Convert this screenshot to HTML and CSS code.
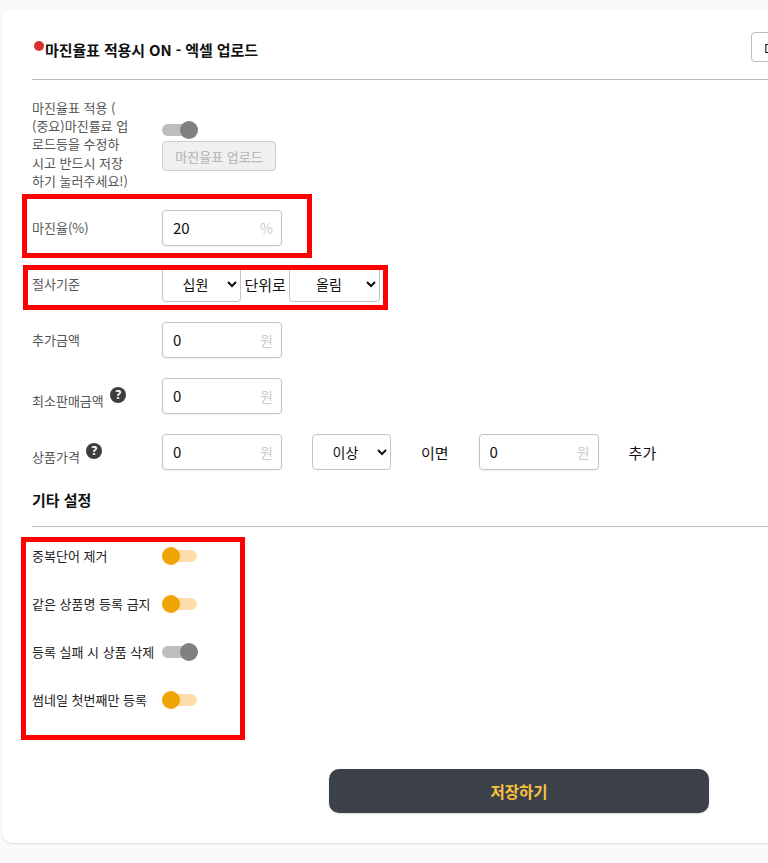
FILE: index.html
```html
<!DOCTYPE html>
<html lang="ko">
<head>
  <meta charset="UTF-8" />
  <meta name="viewport" content="width=device-width, initial-scale=1.0" />
  <title>마진율표 설정</title>
  <link rel="stylesheet" href="styles.css">
</head>
<body>
<div class="card">
  <div class="title-row">
    <h2 class="title"><span class="dot"></span>마진율표 적용시 ON - 엑셀 업로드</h2>
    <div class="title-actions"><button class="btn-outline">Download</button></div>
  </div>

  <div class="row row-first">
    <div class="label">마진율표 적용 (<br>(중요)마진률료 업<br>로드등을 수정하<br>시고 반드시 저장<br>하기 눌러주세요!)</div>
    <div class="stack">
      <div class="toggle off"><span class="knob"></span></div>
      <button class="btn-upload" disabled>마진율표 업로드</button>
    </div>
  </div>

  <div class="row">
    <div class="label">마진율(%)</div>
    <div class="controls">
      <div class="field"><input type="text" value="20"><span class="unit">%</span></div>
    </div>
  </div>

  <div class="row">
    <div class="label">절사기준</div>
    <div class="controls controls-tight">
      <select class="select"><option>십원</option></select>
      <span class="text">단위로</span>
      <select class="select select-wide"><option>올림</option></select>
    </div>
  </div>

  <div class="row">
    <div class="label">추가금액</div>
    <div class="controls">
      <div class="field"><input type="text" value="0"><span class="unit">원</span></div>
    </div>
  </div>

  <div class="row">
    <div class="label label-help">최소판매금액 <span class="help">?</span></div>
    <div class="controls">
      <div class="field"><input type="text" value="0"><span class="unit">원</span></div>
    </div>
  </div>

  <div class="row">
    <div class="label label-help">상품가격 <span class="help">?</span></div>
    <div class="controls">
      <div class="field"><input type="text" value="0"><span class="unit">원</span></div>
      <select class="select"><option>이상</option></select>
      <span class="text">이면</span>
      <div class="field"><input type="text" value="0"><span class="unit">원</span></div>
      <span class="text">추가</span>
    </div>
  </div>

  <h3 class="section-title">기타 설정</h3>

  <div class="setting">
    <div class="label label-dark">중복단어 제거</div>
    <div class="toggle on"><span class="knob"></span></div>
  </div>
  <div class="setting">
    <div class="label label-dark">같은 상품명 등록 금지</div>
    <div class="toggle on"><span class="knob"></span></div>
  </div>
  <div class="setting">
    <div class="label label-dark">등록 실패 시 상품 삭제</div>
    <div class="toggle off"><span class="knob"></span></div>
  </div>
  <div class="setting">
    <div class="label label-dark">썸네일 첫번째만 등록</div>
    <div class="toggle on"><span class="knob"></span></div>
  </div>

  <div class="save-row"><button class="btn-save">저장하기</button></div>

  <!-- red marks drawn over the form -->
  <div class="mark mark-rate"></div>
  <div class="mark mark-cut"></div>
  <div class="mark mark-settings"></div>
</div>
</body>
</html>
```

FILE: styles.css
```css
* { box-sizing: border-box; margin: 0; padding: 0; }

html, body {
  height: 100%;
  overflow: hidden;
}

body {
  font-family: "Noto Sans CJK KR", "Noto Sans", sans-serif;
  background: #fafafa;
  color: #111;
}

.card {
  position: relative;
  width: 1034px;
  height: 833px;
  margin: 10px 0 0 2px;
  padding: 22px 30px 0;
  background: #fff;
  border-radius: 10px;
  box-shadow: 0 1px 2px rgba(0,0,0,0.12);
}

.title-row {
  display: flex;
  justify-content: space-between;
  align-items: flex-start;
  height: 48px;
  border-bottom: 1px solid #bdbdbd;
}

.title {
  margin-top: 7px;
  font-size: 15px;
  font-weight: 700;
  line-height: 22px;
  letter-spacing: -0.1px;
  color: #111;
}

.dot {
  display: inline-block;
  width: 10px;
  height: 10px;
  margin: 0 1px 0 2px;
  border-radius: 50%;
  background: #d93030;
  vertical-align: 5px;
}

.title-actions { width: 255px; }

.btn-outline {
  width: 110px;
  height: 30px;
  padding: 0 12px;
  background: #fff;
  border: 1px solid #bdbdbd;
  border-radius: 4px;
  font: 12px "Noto Sans CJK KR", sans-serif;
  color: #111;
  text-align: left;
}

.row {
  display: flex;
  align-items: center;
  margin-top: 20px;
}

.row-first {
  align-items: flex-start;
  margin-top: 19px;
}

.controls {
  display: flex;
  align-items: center;
  gap: 30px;
}

.controls-tight { gap: 3.5px; }

.label {
  flex: none;
  width: 130px;
  font-size: 13px;
  line-height: 18.2px;
  color: #555;
}

.label-help { padding-top: 5px; }

.label-dark { color: #222; }

.stack {
  display: flex;
  flex-direction: column;
  align-items: flex-start;
  gap: 5px;
  padding-top: 25px;
}

.btn-upload {
  width: 114px;
  height: 30px;
  background: #f0f0f0;
  border: 1px solid #ccc;
  border-radius: 4px;
  font: 500 13px "Noto Sans CJK KR", sans-serif;
  color: #bbb;
}

.field {
  display: flex;
  align-items: center;
  width: 120px;
  height: 36px;
  padding: 0 8px 0 10px;
  background: #fff;
  border: 1px solid #c4c4c4;
  border-radius: 4px;
  box-shadow: 0 1px 2px rgba(0,0,0,0.06);
}

.field input {
  flex: 1;
  min-width: 0;
  padding-bottom: 2px;
  border: none;
  outline: none;
  font: 15px "Noto Sans CJK KR", sans-serif;
  color: #111;
  background: transparent;
}

.unit {
  font-size: 14px;
  color: #ccc;
}

.select {
  width: 79px;
  height: 36px;
  background: #fff;
  border: 1px solid #c4c4c4;
  border-radius: 4px;
  font: 14px "Noto Sans CJK KR", sans-serif;
  color: #111;
  text-align: center;
}

.select-wide { width: 91px; }

.text {
  font-size: 15px;
  color: #111;
}

.help {
  display: inline-block;
  width: 16px;
  height: 16px;
  margin-left: 3px;
  border-radius: 50%;
  background: #3d3d3d;
  color: #fff;
  font: 700 12px/16px "Noto Sans", sans-serif;
  text-align: center;
  vertical-align: 7px;
}

.section-title {
  margin-top: 19px;
  padding-bottom: 15px;
  border-bottom: 1px solid #bdbdbd;
  font-size: 15px;
  line-height: 22px;
  font-weight: 700;
  color: #111;
}

.setting {
  display: flex;
  align-items: center;
  height: 24px;
  margin-top: 24px;
}

.section-title + .setting { margin-top: 17px; }

.toggle {
  flex: none;
  display: flex;
  align-items: center;
  width: 35px;
  height: 12px;
  border-radius: 6px;
}

.knob {
  flex: none;
  width: 18px;
  height: 18px;
  border-radius: 50%;
}

.toggle.on { background: #ffdca8; }
.toggle.on .knob { background: #f0a505; }

.toggle.off {
  justify-content: flex-end;
  background: #bdbdbd;
}
.toggle.off .knob { background: #808080; margin-right: -1px; }

.save-row {
  display: flex;
  justify-content: center;
  margin-top: 57px;
}

.btn-save {
  width: 380px;
  height: 44px;
  background: #3c4048;
  border: none;
  border-radius: 10px;
  font: 700 15.5px "Noto Sans CJK KR", sans-serif;
  color: #f9c03f;
  box-shadow: 0 1px 2px rgba(0,0,0,0.15);
}

.mark {
  position: absolute;
  border: 5px solid #ff0000;
  pointer-events: none;
}

.mark-rate { left: 20px; top: 184px; width: 290px; height: 64px; }
.mark-cut { left: 21px; top: 255px; width: 365px; height: 45px; }
.mark-settings { left: 19px; top: 527px; width: 224px; height: 203px; }
```
